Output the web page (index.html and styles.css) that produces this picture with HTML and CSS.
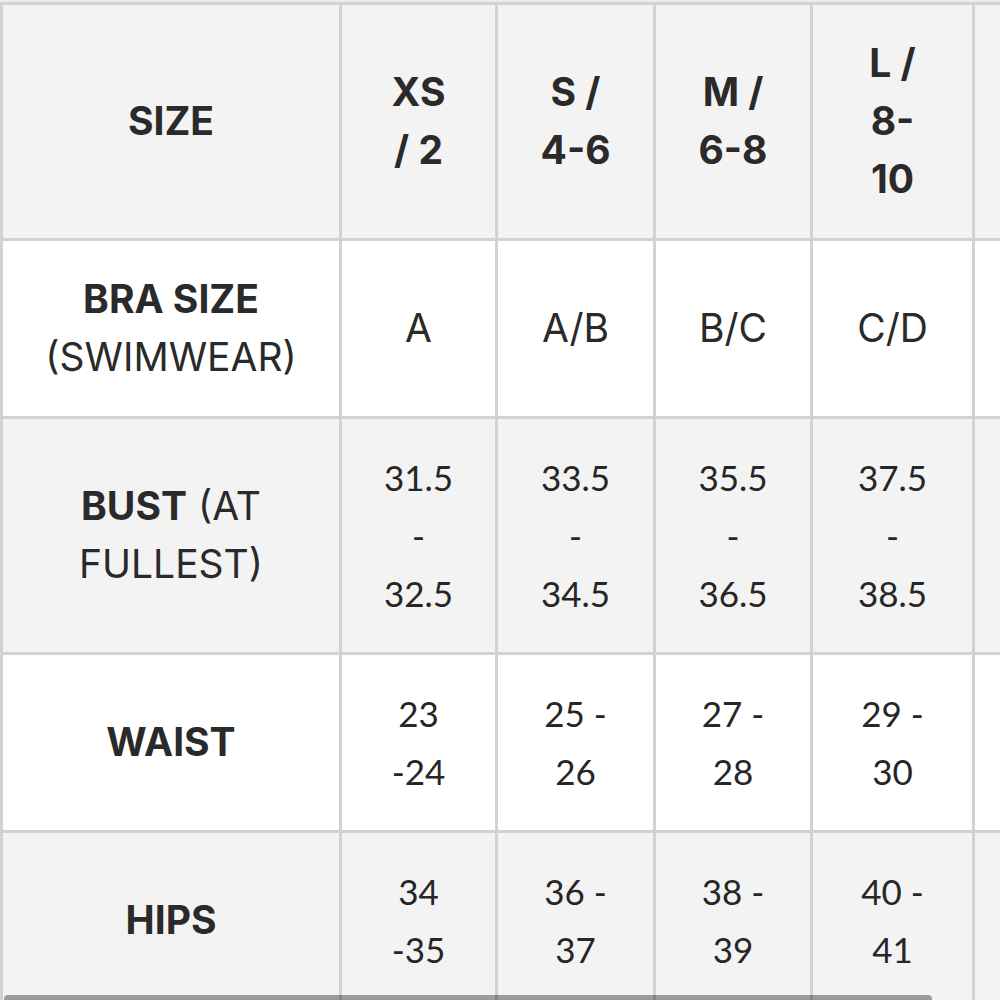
FILE: index.html
```html
<!DOCTYPE html>
<html>
<head>
<meta charset="utf-8">
<link rel="stylesheet" href="styles.css">
</head>
<body>
<div class="viewport">
  <table class="size-chart">
    <colgroup>
      <col class="c0"><col class="c1"><col class="c2"><col class="c3"><col class="c4"><col class="c5">
    </colgroup>
    <tr class="shade">
      <th>SIZE</th>
      <th>XS<br>/ 2</th>
      <th>S /<br>4-6</th>
      <th>M /<br>6-8</th>
      <th>L /<br>8-<br>10</th>
      <th></th>
    </tr>
    <tr>
      <td class="label"><b>BRA SIZE</b><br>(SWIMWEAR)</td>
      <td class="txt">A</td>
      <td class="txt">A/B</td>
      <td class="txt">B/C</td>
      <td class="txt">C/D</td>
      <td></td>
    </tr>
    <tr class="shade">
      <td class="label"><b>BUST</b> (AT<br>FULLEST)</td>
      <td>31.5<br>-<br>32.5</td>
      <td>33.5<br>-<br>34.5</td>
      <td>35.5<br>-<br>36.5</td>
      <td>37.5<br>-<br>38.5</td>
      <td></td>
    </tr>
    <tr>
      <td class="label"><b>WAIST</b></td>
      <td>23<br>-24</td>
      <td>25 -<br>26</td>
      <td>27 -<br>28</td>
      <td>29 -<br>30</td>
      <td></td>
    </tr>
    <tr class="shade">
      <td class="label"><b>HIPS</b></td>
      <td>34<br>-35</td>
      <td>36 -<br>37</td>
      <td>38 -<br>39</td>
      <td>40 -<br>41</td>
      <td></td>
    </tr>
  </table>
  <div class="scroll-thumb"></div>
</div>
</body>
</html>
```
FILE: styles.css
```css
html, body {
  margin: 0;
  padding: 0;
  background: #ffffff;
}

.viewport {
  position: relative;
  width: 1000px;
  height: 1000px;
  overflow: hidden;
  padding-top: 2px;
  box-sizing: border-box;
  background: #ececec;
}

.size-chart {
  border-collapse: separate;
  border-spacing: 0;
  table-layout: fixed;
  width: 1150px;
  border-left: 3px solid #d2d2d2;
  border-top: 3px solid #d2d2d2;
  font-family: "Lato", "Liberation Sans", sans-serif;
  color: #262626;
  font-size: 35px;
  line-height: 58px;
}

.c0 { width: 339px; }
.c1 { width: 156px; }
.c2 { width: 158px; }
.c3 { width: 157px; }
.c4 { width: 162px; }
.c5 { width: 178px; }

.size-chart th,
.size-chart td {
  border-right: 3px solid #d2d2d2;
  border-bottom: 3px solid #d2d2d2;
  padding: 29px 0 30px;
  text-align: center;
  vertical-align: middle;
  background: #ffffff;
  font-weight: 400;
}

.size-chart th {
  font-family: "Inter", "Liberation Sans", sans-serif;
  font-size: 39px;
  font-weight: 700;
  color: #2a2a2a;
}

.size-chart .label,
.size-chart .txt {
  font-family: "Inter", "Liberation Sans", sans-serif;
  font-size: 39px;
  color: #2a2a2a;
}

.size-chart .shade th,
.size-chart .shade td {
  background: #f3f3f3;
}

.size-chart tr:first-child th {
  height: 174px;
}

.label b {
  font-weight: 700;
}

.scroll-thumb {
  position: absolute;
  left: 4px;
  bottom: -3px;
  width: 928px;
  height: 8px;
  border-radius: 4px;
  background: rgba(0, 0, 0, 0.36);
}
```
